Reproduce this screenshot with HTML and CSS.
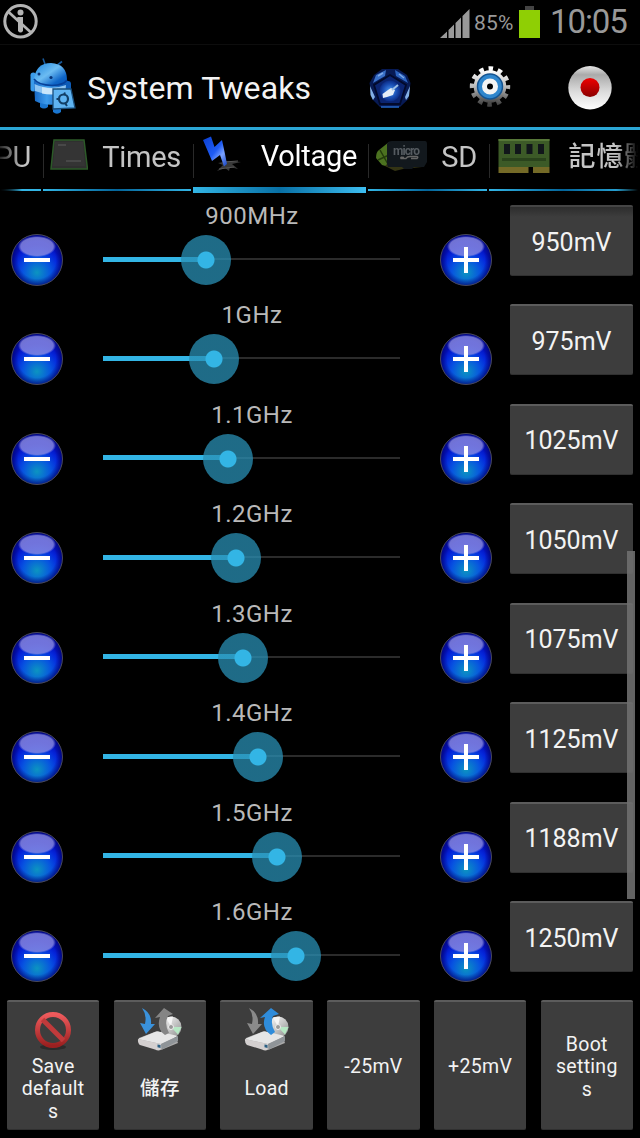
FILE: index.html
```html
<!DOCTYPE html>
<html lang="en">
<head>
    <meta charset="UTF-8">
    <meta name="viewport" content="width=device-width, initial-scale=1.0">
    <title>System Tweaks</title>
    <link rel="stylesheet" href="styles.css">
</head>
<body>
    <!-- Shared gradients -->
    <svg class="defs" width="0" height="0">
        <defs>
            <linearGradient id="droid" x1="0" y1="0" x2="1" y2="1">
                <stop offset="0" stop-color="#1c84de"/><stop offset=".45" stop-color="#6cbcf2"/><stop offset=".75" stop-color="#0f66c8"/><stop offset="1" stop-color="#064fae"/>
            </linearGradient>
            <linearGradient id="body" x1="0" y1="0" x2="1" y2="0">
                <stop offset="0" stop-color="#1667c4"/><stop offset=".4" stop-color="#3d9cec"/><stop offset="1" stop-color="#0b55b0"/>
            </linearGradient>
            <linearGradient id="silver" x1="0" y1="0" x2="0" y2="1">
                <stop offset="0" stop-color="#fff"/><stop offset=".5" stop-color="#bbb"/><stop offset="1" stop-color="#444"/>
            </linearGradient>
            <linearGradient id="white" x1="0" y1="0" x2="0" y2="1">
                <stop offset="0" stop-color="#e4e4e4"/><stop offset=".2" stop-color="#aaa"/><stop offset=".6" stop-color="#ddd"/><stop offset="1" stop-color="#fff"/>
            </linearGradient>
            <linearGradient id="red" x1="0" y1="0" x2="0" y2="1">
                <stop offset="0" stop-color="#f00000"/><stop offset="1" stop-color="#8a0000"/>
            </linearGradient>
            <linearGradient id="ban" x1="0" y1="0" x2="0" y2="1">
                <stop offset="0" stop-color="#ee5a5c"/><stop offset="1" stop-color="#9b2020"/>
            </linearGradient>
            <radialGradient id="orb" cx=".5" cy=".5" r=".5">
                <stop offset="0" stop-color="#4f9cf0"/><stop offset=".6" stop-color="#1c52b8"/><stop offset="1" stop-color="#0b2c86"/>
            </radialGradient>
            <linearGradient id="disk" x1="0" y1="0" x2="1" y2="1">
                <stop offset="0" stop-color="#fff"/><stop offset=".5" stop-color="#c8c8c8"/><stop offset="1" stop-color="#8a8a8a"/>
            </linearGradient>
            <linearGradient id="bolt" x1="0" y1="0" x2="1" y2="1">
                <stop offset="0" stop-color="#0b3fd0"/><stop offset=".5" stop-color="#1f5cf5"/><stop offset=".7" stop-color="#7ba2ff"/><stop offset="1" stop-color="#1240c0"/>
            </linearGradient>
            <g id="drive">
                <circle cx="35" cy="21" r="10.500" fill="url(#disk)"/>
                <path d="M35 21 L30 11.500 L37 10.500Z" fill="#f5f5f5"/>
                <path d="M35 21 L45.500 21 L42 28.500Z" fill="#b6e8c4"/>
                <circle cx="35" cy="21" r="2.500" fill="#999" stroke="#eee"/>
                <path d="M3 32 L21 25 L40 32 L42 37 L25 44 L3 38Z" fill="#aaa"/>
                <path d="M2 33 L19 26 Q22 25 25 26 L42 30 L25 38Z" fill="#e6e6e6"/>
                <path d="M2 33 L25 38 L24.500 44 Q22 45 19 43.500 L4 39 Q1.500 37 2 33Z" fill="#d4d0d0"/>
                <path d="M25 38 L42 30 L42 35 L26 43.500Z" fill="#8f9498"/>
                <path d="M21.500 38.500 L24.500 39 V42 L21.500 41.200Z" fill="#2a5f83"/>
            </g>
        </defs>
    </svg>

    <!-- Status bar -->
    <div class="status-bar">
        <svg class="blocked-icon" viewBox="0 0 36 36" width="36" height="36">
            <g fill="none" stroke="#b4b4b4">
                <circle cx="18.500" cy="18.300" r="15.700" stroke-width="3"/>
                <path d="M6 8.500 L29 29.500" stroke-width="2.700"/>
            </g>
            <circle cx="18.500" cy="9.500" r="3" fill="#b4b4b4"/>
            <path d="M15.500 14 H21 V28 Q18.500 31 16 28 V19 L14.500 17Z" fill="#b4b4b4"/>
        </svg>
        <div class="status-right">
            <svg class="signal-icon" viewBox="0 0 30 29" width="30" height="29">
                <path d="M0 29 L7 22.500 V29Z M8.500 21 L14 15.500 V29 H8.500Z M15.500 14 L21 8.500 V29 H15.500Z M22.500 7 L29.500 0 V29 H22.500Z" fill="#999"/>
            </svg>
            <span class="battery-level">85%</span>
            <svg class="battery-icon" viewBox="0 0 21 32" width="21" height="32">
                <rect x="6" y="0" width="9" height="5" fill="#444"/>
                <rect x="0" y="4" width="21" height="28" fill="#8fcf04"/>
            </svg>
            <span class="clock">10:05</span>
        </div>
    </div>

    <!-- Title bar -->
    <div class="action-bar">
        <svg class="app-icon" viewBox="0 0 46 58" width="46" height="58">
            <path d="M15 7 L13 1.500 M27.500 8 L32 4.500" stroke="#185a9c" stroke-width="1.600" fill="none"/>
            <rect x="0.500" y="15.500" width="5.500" height="19" rx="2.700" fill="#3a9bea"/>
            <rect x="34" y="24" width="7" height="14" rx="3" fill="#0d5cb8"/>
            <path d="M10 43 h8 v7 q-4 3 -8 0Z M23 43 h8 v12 q-4 3.500 -8 0Z" fill="#1a76d0"/>
            <path d="M4 24 L36 27 L35 45 Q20 51 5 44Z" fill="url(#body)"/>
            <path d="M4.500 27 Q20 34 36 28 L35.500 34 Q20 40 5 34Z" fill="#8cc4f2"/>
            <path d="M12 30 Q20 32 27 31 V37 Q20 38 12 36.500Z" fill="#c9e6fb"/>
            <path d="M4 22 Q6 6 21 6 Q37 7 37 23 Q36 29 22 29 Q6 28 4 22Z" fill="url(#droid)"/>
            <path d="M4 22 Q8 28 22 28.500 Q34 28 37 23" fill="none" stroke="#06419a" stroke-width="1.500"/>
            <circle cx="9" cy="17" r="1.500" fill="#073579"/>
            <circle cx="21" cy="20.500" r="1.600" fill="#073579"/>
            <path d="M23 32 L41 32 L45 51 L23 52Z" fill="#5fb4f2" stroke="#194d7a" stroke-width="1.300"/>
            <circle cx="33.500" cy="42" r="4.500" fill="none" stroke="#123f66" stroke-width="2.200"/>
            <path d="M35 35.500 l-1 2.500 M26.500 42 h3 M35 46 l2 3" stroke="#123f66" stroke-width="2"/>
        </svg>
        <h1>System Tweaks</h1>
        <div class="actions">
            <svg viewBox="0 0 44 44" width="44" height="44">
                <path d="M14 3 L30 3 L39 9 L42.500 17 L40.500 33 L32 41 H12 L4 33 L1.500 17 L6 9Z" fill="#071a54"/>
                <path d="M8 9 L18 4 L17 10 L5 17Z" fill="#3970c8"/>
                <path d="M27 4 L37 10 L40 17 L28 10Z" fill="#2b63bf"/>
                <path d="M10 10 l5 -3 M31 8 l5 4" stroke="#7fa9e6" stroke-width="1.500"/>
                <path d="M2 20 L7 31 L5 34 L2.500 29Z M42 20 L37 31 L38 34 L41 30Z" fill="#82afe6"/>
                <path d="M22 9 L38 19 L32 38 H12 L6 19Z" fill="#0b2470" stroke="#020a2c" stroke-width="1.800"/>
                <circle cx="22" cy="25" r="10.500" fill="url(#orb)"/>
                <path d="M14.500 28 L20 24 L23 22 L27 24 L25 29 L19 31 L15 32Z" fill="#e6edf7"/>
                <path d="M24 24 L30 19" stroke="#9cbfe6" stroke-width="2"/>
                <path d="M13 41 H31" stroke="#2367ca" stroke-width="1.500"/>
            </svg>
            <svg viewBox="0 0 44 44" width="44" height="44">
                <circle cx="22" cy="20.500" r="17.700" fill="none" stroke="url(#silver)" stroke-width="5" stroke-dasharray="4.500 4.768" stroke-dashoffset="2"/>
                <circle cx="22" cy="20.500" r="16.300" fill="url(#silver)"/>
                <circle cx="22" cy="20.500" r="12.500" fill="#2f86cd" stroke="#145390" stroke-width="1.500"/>
                <circle cx="22" cy="20.500" r="5.500" fill="#000" stroke="#f4f4f4" stroke-width="5"/>
            </svg>
            <svg viewBox="0 0 44 44" width="44" height="44">
                <circle cx="22" cy="21.800" r="21.700" fill="url(#white)"/>
                <circle cx="22" cy="21.500" r="9.500" fill="url(#red)"/>
            </svg>
        </div>
    </div>

    <!-- Tabs -->
    <div class="tabs">
        <div class="tab tab-cpu"><span>CPU</span></div>
        <div class="tab">
            <svg class="chip" viewBox="0 0 38 32" width="38" height="32">
                <path d="M4 1 H34 L37.500 30 H1Z" fill="#2f2f2f" stroke="#2c5a28" stroke-width="1.500"/>
                <path d="M5 3 H33 L35 27 H3Z" fill="#343434"/>
                <path d="M8 6 h8 M16 22 h15" stroke="#484848" stroke-width="2" fill="none"/>
            </svg>
            <span>Times</span>
        </div>
        <div class="tab active">
            <svg viewBox="0 0 40 38" width="40" height="38">
                <path d="M15 28 l5 2 -6 6 8 -3 4 3 1 -4 8 2 -6 -5 9 -2 -12 -1z" fill="#393939"/>
                <path d="M21 27 L35 26 M16 34 L31 32" stroke="#555" stroke-width="1.200"/>
                <path d="M0 5 L8 1.500 L11.500 12 L19 5 L22 19 L24 29 L21 31.500 L17 20 L9 26Z" fill="url(#bolt)"/>
            </svg>
            <span>Voltage</span>
        </div>
        <div class="tab">
            <svg viewBox="0 0 52 34" width="52" height="34">
                <path d="M1 20 Q1 14 4 12 L14 4 V29 L7 27Z" fill="#4c7220"/>
                <path d="M3 22 L14 17 M5 12 L14 28" stroke="#243c0c" stroke-width="1.500"/>
                <path d="M10 28 L20 33 L28 31 L47 29 V26 L14 24Z" fill="#343414"/>
                <path d="M17 3 H50 Q52 3 52 6 V24 L49 29 H39 L37 31 H29 L27 29 H13 L12 26 V6 Q13 3 17 3Z" fill="#12181d"/>
                <text x="18" y="17" class="card-label" textLength="27">micro</text>
                <path d="M29 19.500 q-4 -1 -3 1 h5 q1 -2 4 -2 h6 q3 0 1 2 h-6" stroke="#666" stroke-width="1.500" fill="none"/>
            </svg>
            <span>SD</span>
        </div>
        <div class="tab tab-memory">
            <svg viewBox="0 0 52 36" width="52" height="36">
                <path d="M0.500 1 H51.500 V29 H0.500Z" fill="#3c5a27"/>
                <path d="M0.500 1 H51.500 V3 H0.500Z" fill="#567638"/>
                <path d="M6 6 h6 v10 h-6z M17 6 h6 v10 h-6z M28.500 6 h6 v10 h-6z M40 6 h6 v10 h-6z" fill="#11161a"/>
                <path d="M4 20 H48 V23 H4Z" fill="#2a431c"/>
                <path d="M0.500 29 H30.500 V35 H0.500Z M35 29 H51.500 V35 H35Z" fill="#746a27"/>
            </svg>
            <span class="memory">記憶體</span>
        </div>
    </div>

    <!-- Voltage list -->
    <div class="voltage-list">
        <div class="voltage-row">
            <button class="round minus"></button>
            <div class="control">
                <label>900MHz</label>
                <div class="slider"><div class="progress" style="width: 103px"></div><div class="thumb"></div></div>
            </div>
            <button class="round plus"></button>
            <button class="value">950mV</button>
        </div>
        <div class="voltage-row">
            <button class="round minus"></button>
            <div class="control">
                <label>1GHz</label>
                <div class="slider"><div class="progress" style="width: 111px"></div><div class="thumb"></div></div>
            </div>
            <button class="round plus"></button>
            <button class="value">975mV</button>
        </div>
        <div class="voltage-row">
            <button class="round minus"></button>
            <div class="control">
                <label>1.1GHz</label>
                <div class="slider"><div class="progress" style="width: 125px"></div><div class="thumb"></div></div>
            </div>
            <button class="round plus"></button>
            <button class="value">1025mV</button>
        </div>
        <div class="voltage-row">
            <button class="round minus"></button>
            <div class="control">
                <label>1.2GHz</label>
                <div class="slider"><div class="progress" style="width: 133px"></div><div class="thumb"></div></div>
            </div>
            <button class="round plus"></button>
            <button class="value">1050mV</button>
        </div>
        <div class="voltage-row">
            <button class="round minus"></button>
            <div class="control">
                <label>1.3GHz</label>
                <div class="slider"><div class="progress" style="width: 140px"></div><div class="thumb"></div></div>
            </div>
            <button class="round plus"></button>
            <button class="value">1075mV</button>
        </div>
        <div class="voltage-row">
            <button class="round minus"></button>
            <div class="control">
                <label>1.4GHz</label>
                <div class="slider"><div class="progress" style="width: 155px"></div><div class="thumb"></div></div>
            </div>
            <button class="round plus"></button>
            <button class="value">1125mV</button>
        </div>
        <div class="voltage-row">
            <button class="round minus"></button>
            <div class="control">
                <label>1.5GHz</label>
                <div class="slider"><div class="progress" style="width: 174px"></div><div class="thumb"></div></div>
            </div>
            <button class="round plus"></button>
            <button class="value">1188mV</button>
        </div>
        <div class="voltage-row">
            <button class="round minus"></button>
            <div class="control">
                <label>1.6GHz</label>
                <div class="slider"><div class="progress" style="width: 193px"></div><div class="thumb"></div></div>
            </div>
            <button class="round plus"></button>
            <button class="value">1250mV</button>
        </div>
        <div class="scrollbar"></div>
    </div>

    <!-- Bottom buttons -->
    <div class="bottom-bar">
        <button class="with-icon">
            <svg viewBox="0 0 48 48" width="48" height="48">
                <ellipse cx="24" cy="41" rx="13" ry="3" fill="#2b2b2b"/>
                <circle cx="24" cy="24" r="15.500" fill="none" stroke="url(#ban)" stroke-width="5"/>
                <path d="M13.500 13.500 L34.500 34.500" stroke="#c03a3b" stroke-width="5"/>
            </svg>
            <span>Save<br>default<br>s</span>
        </button>
        <button class="with-icon">
            <svg viewBox="0 0 48 48" width="48" height="48">
                <use href="#drive"/>
                <path d="M29 29 Q20 22 24 11 L19 12 L28 2 L37 8 L32 10 Q28 18 33 27Z" fill="#858585"/>
                <path d="M6 2 Q16 7 15 18 L19 18 L10 28 L4 17 L9 18 Q11 9 6 2Z" fill="#3a92dc"/>
            </svg>
            <span class="cjk">儲存</span>
        </button>
        <button class="with-icon">
            <svg viewBox="0 0 48 48" width="48" height="48">
                <use href="#drive"/>
                <path d="M6 2 Q16 7 15 18 L19 18 L10 28 L4 17 L9 18 Q11 9 6 2Z" fill="#8a8a8a"/>
                <path d="M28 29 Q18 22 22 11 L17 12 L28 2 L36 8 L30 10 Q27 18 32 26Z" fill="#2f8cdb"/>
            </svg>
            <span>Load</span>
        </button>
        <button><span>-25mV</span></button>
        <button><span>+25mV</span></button>
        <button><span>Boot<br>setting<br>s</span></button>
    </div>
</body>
</html>
```
FILE: styles.css
```css
* {
    box-sizing: border-box;
}

body {
    font-family: Roboto, "Noto Sans CJK TC", sans-serif;
    margin: 0;
    height: 1138px;
    overflow: hidden;
    background-color: #000;
    color: #f3f3f3;
}

svg {
    display: block;
    flex: none;
}

.defs {
    position: absolute;
}

button {
    font-family: inherit;
    color: #f3f3f3;
    border: none;
    padding: 0;
}

/* Status bar */
.status-bar {
    display: flex;
    justify-content: space-between;
    height: 45px;
    padding: 3px 13px 0 2px;
    border-bottom: 1px solid #0d0d0d;
}

.status-right {
    display: flex;
    align-items: flex-start;
    color: #999;
}

.signal-icon {
    margin: 6px 4px 0 0;
}

.battery-level {
    width: 41px;
    font-size: 21px;
    line-height: 41px;
    letter-spacing: 0.2px;
}

.battery-icon {
    margin: 3px 10px 0 4px;
}

.clock {
    width: 77px;
    font-size: 33px;
    line-height: 38px;
    letter-spacing: -1.1px;
    white-space: nowrap;
}

/* Title bar */
.action-bar {
    display: flex;
    align-items: center;
    height: 85px;
    padding: 0 28px 0 30px;
    border-bottom: 3px solid #2ba6d5;
}

.app-icon {
    margin-right: 11px;
}

h1 {
    flex: 1;
    margin: 3px 0 0;
    font-size: 32px;
    font-weight: normal;
    letter-spacing: 0.1px;
    white-space: nowrap;
}

.actions {
    display: flex;
    gap: 56px;
    margin-top: 3px;
}

/* Tabs */
.tabs {
    display: grid;
    grid-template-columns: 43px 150px 175px 121px 151px;
    height: 63px;
    overflow: hidden;
    -webkit-mask-image: linear-gradient(to right, rgba(0,0,0,0.2), #000 22px, #000 616px, transparent 638px);
    mask-image: linear-gradient(to right, rgba(0,0,0,0.2), #000 22px, #000 616px, transparent 638px);
}

.tab {
    display: flex;
    align-items: flex-start;
    justify-content: space-between;
    padding: 8px 12px 0 7px;
    color: #c4c4c4;
    font-size: 29px;
    line-height: 39px;
    letter-spacing: -0.3px;
    white-space: nowrap;
    overflow: hidden;
    background:
        linear-gradient(#292929, #292929) left 14px / 1px 34px no-repeat,
        linear-gradient(to right, #33b5e5, #04659a 50%, #33b5e5) 0 59px / calc(100% - 2px) 2px no-repeat;
}

.tab-cpu {
    justify-content: flex-end;
    background:
        linear-gradient(to right, #000, #33b5e5 22px) 0 59px / 41px 2px no-repeat;
}

.tab.active {
    padding-left: 10px;
    padding-right: 11px;
    line-height: 36px;
    color: #fff;
    background:
        linear-gradient(#292929, #292929) left 14px / 1px 34px no-repeat,
        linear-gradient(to right, #33b5e5, #0870a5 50%, #3dbdf0) 0 57px / calc(100% - 2px) 6px no-repeat;
}

.tab.active svg {
    margin-top: -3px;
}

.tab-memory {
    padding-left: 9px;
}

.chip {
    margin-top: 1px;
}

.card-label {
    font-size: 12px;
    font-weight: bold;
    letter-spacing: 0;
    fill: #555b60;
}

.memory {
    font-size: 27px;
    font-weight: 500;
    letter-spacing: 0.8px;
    margin-right: -24px;
}

/* Voltage rows */
.voltage-list {
    position: relative;
    padding: 12px 7px 0 11px;
}

.voltage-row {
    display: flex;
    height: 99.46px;
}

.round {
    flex: none;
    width: 52px;
    height: 52px;
    margin-top: 29px;
    border-radius: 50%;
    border: 1px solid #494957;
    background:
        radial-gradient(circle 26px at 50% 50%, transparent 72%, rgba(0,0,90,0.7) 100%),
        radial-gradient(circle 28px at 50% 75%, #0c95c0 0, #0754e0 50%, #0428dc 80%, transparent 100%),
        #0412c4;
}

.round::before {
    content: "";
    display: block;
    width: 38px;
    height: 50px;
    margin: auto;
    background:
        linear-gradient(#fff, #fff) 6px 23px / 26px 4px no-repeat,
        radial-gradient(ellipse closest-side, rgba(140,140,225,0.8) 85%, transparent 100%) 0 1px / 38px 21px no-repeat;
}

.plus::before {
    background:
        linear-gradient(#fff, #fff) 6px 23px / 26px 4px no-repeat,
        linear-gradient(#fff, #fff) 17px 12px / 4px 26px no-repeat,
        radial-gradient(ellipse closest-side, rgba(140,140,225,0.8) 85%, transparent 100%) 0 1px / 38px 21px no-repeat;
}

.control {
    width: 297px;
    margin: 0 40px;
    text-align: center;
}

.control label {
    display: block;
    height: 29px;
    padding-left: 1px;
    font-size: 24px;
    line-height: 22px;
    letter-spacing: 0.5px;
    color: #b9b9b9;
}

.slider {
    display: flex;
    align-items: center;
    height: 52px;
    background: linear-gradient(#2b2b2b, #2b2b2b) 0 24px / 100% 2px no-repeat;
}

.progress {
    height: 5px;
    margin-bottom: 2px;
    background-color: #33b5e5;
}

.thumb {
    flex: none;
    width: 50px;
    height: 50px;
    margin-left: -25px;
    border-radius: 50%;
    background: radial-gradient(circle, #33b5e5 8px, rgba(41,143,180,0.75) 9px);
}

.value {
    width: 123px;
    height: 71px;
    margin-left: 18px;
    padding-top: 2px;
    font-size: 25px;
    letter-spacing: 0;
}

.value, .bottom-bar button {
    background-color: #3d3d3d;
    border-top: 2px solid #5c5c5c;
    border-bottom: 1px solid #303030;
    border-radius: 2px;
}

.voltage-row:first-child .value {
    border-top-color: #454545;
    background: linear-gradient(#2d2d2d, #3d3d3d 10px);
}

.scrollbar {
    position: absolute;
    top: 358px;
    right: 5px;
    width: 8px;
    height: 348px;
    background-color: rgba(110,110,110,0.9);
}

/* Bottom buttons */
.bottom-bar {
    display: grid;
    grid-template-columns: repeat(6, 1fr);
    gap: 14.4px;
    padding: 0 7px;
    margin-top: -0.6px;
}

.bottom-bar button {
    display: flex;
    flex-direction: column;
    align-items: center;
    justify-content: center;
    height: 130px;
    padding-top: 4px;
    font-size: 19.5px;
    line-height: 22.2px;
    letter-spacing: 0.3px;
}

.bottom-bar .with-icon {
    justify-content: flex-start;
}

.with-icon span {
    display: flex;
    align-items: center;
    height: 71px;
}

.with-icon .cjk {
    font-weight: 500;
}
```
